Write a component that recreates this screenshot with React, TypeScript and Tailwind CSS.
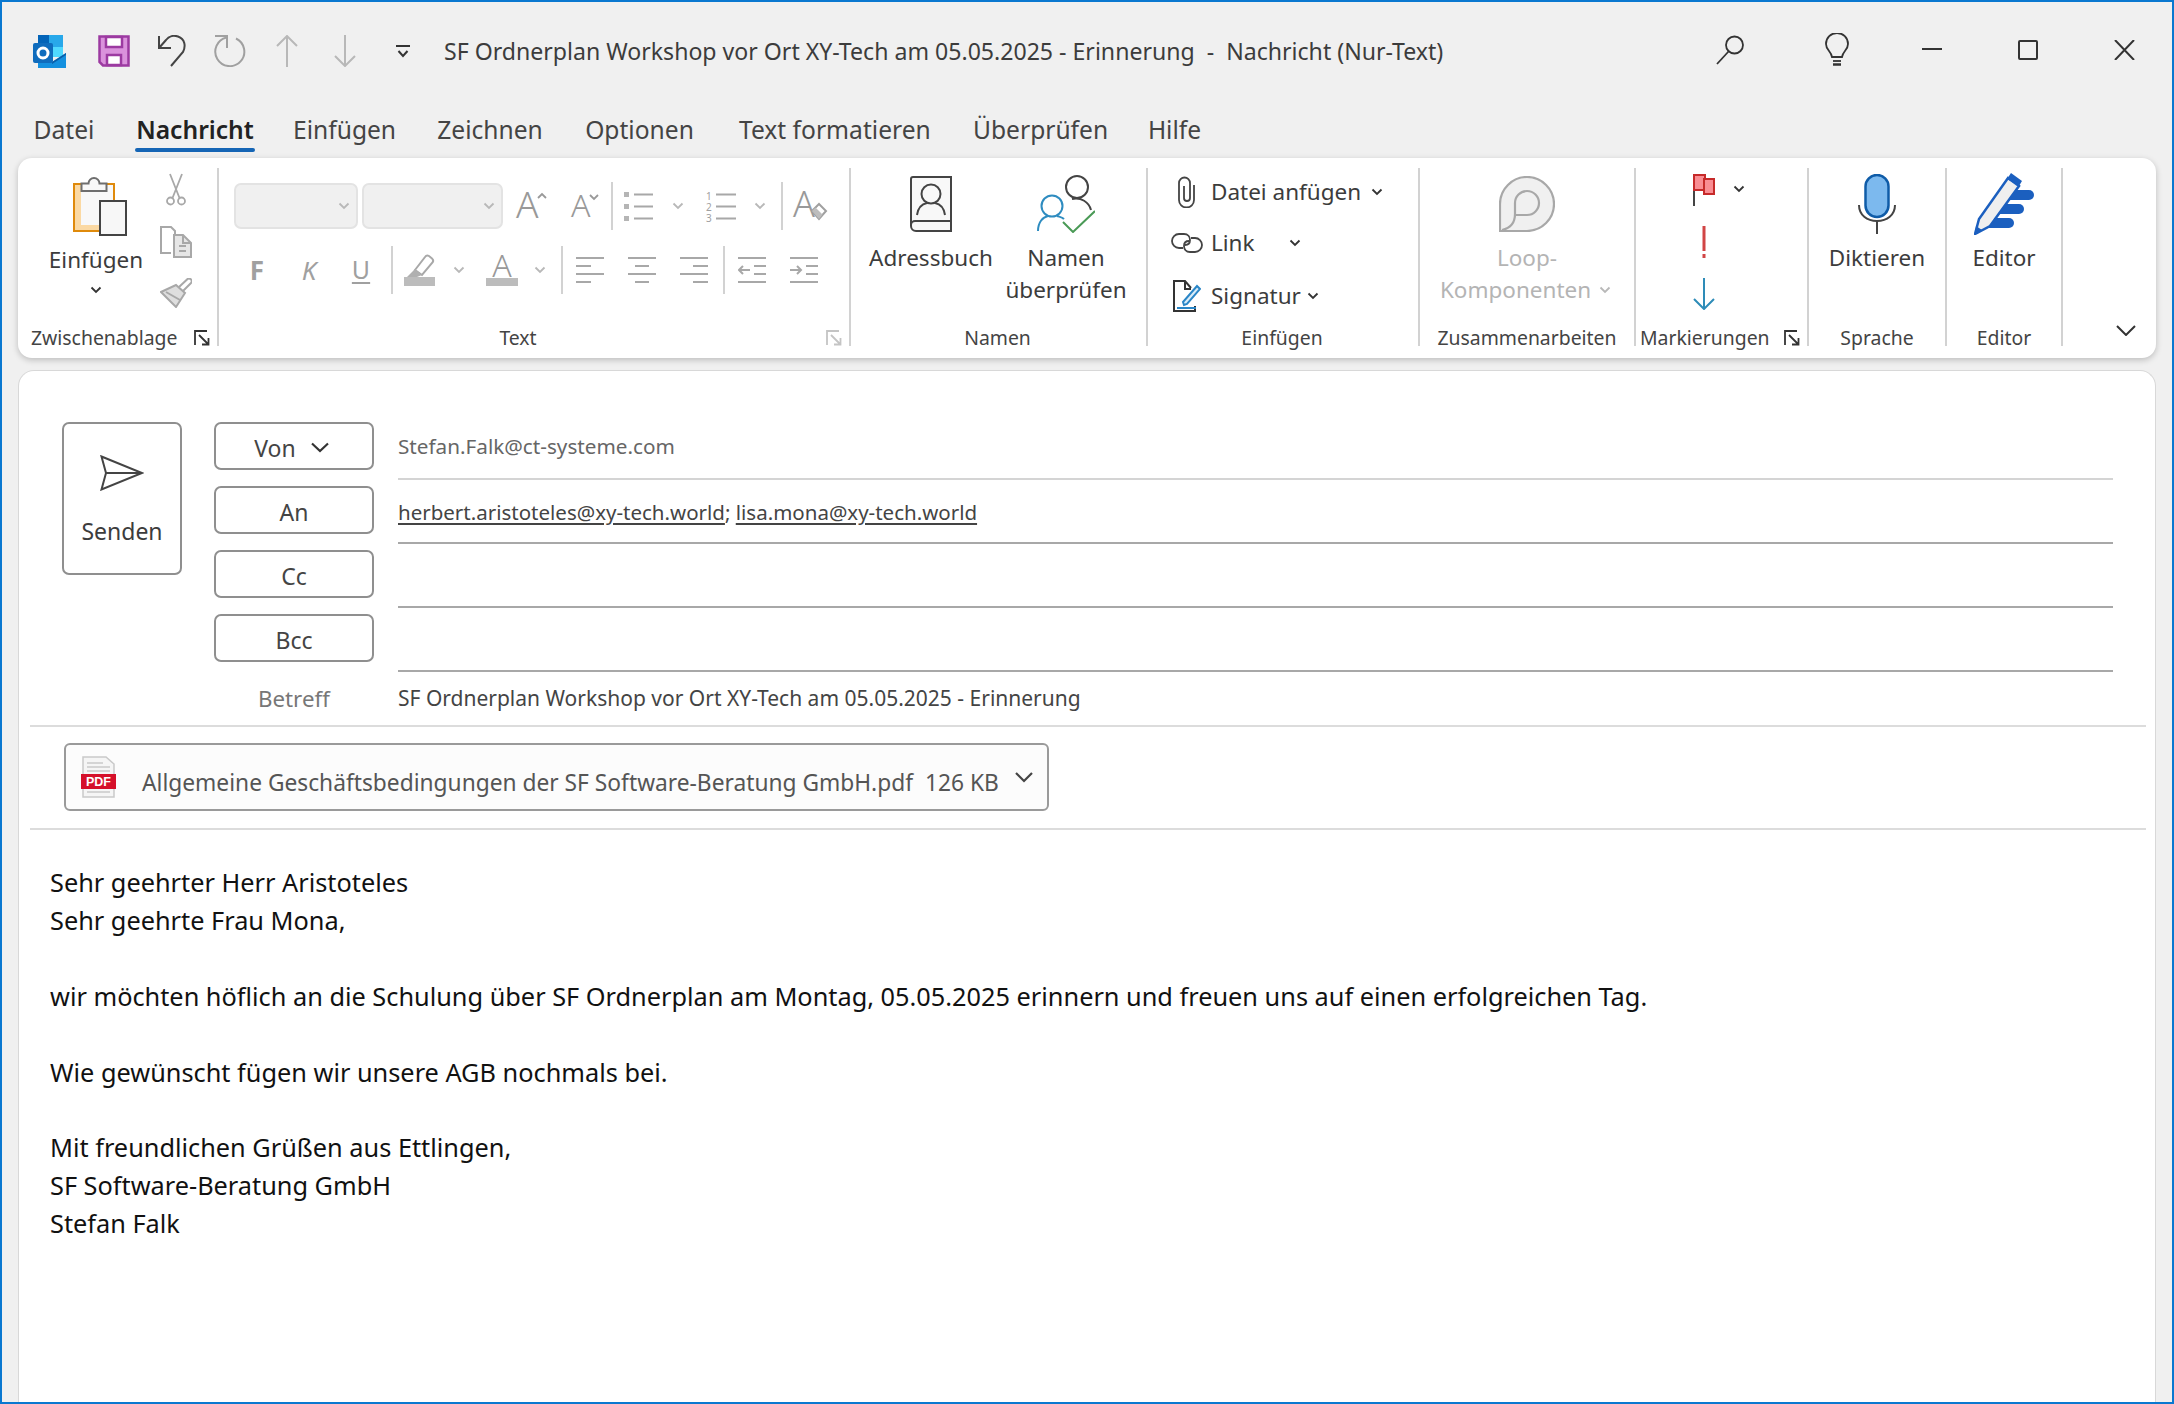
import React from 'react';

const Chev = ({ color = '#333', w = 12 }: { color?: string; w?: number }) => (
  <svg width={w} height={8} viewBox="0 0 12 8" className="shrink-0">
    <polyline points="1.5,1.5 6,6 10.5,1.5" fill="none" stroke={color} strokeWidth="1.8" />
  </svg>
);

const GRAY = '#a8a8a8';
const FONT = 'Noto Sans';

const Launcher = ({ color = '#333' }: { color?: string }) => (
  <svg width={16} height={16} viewBox="0 0 16 16">
    <path d="M1 15V1H13M5 5L14.5 14.5M14.5 8V14.5H8" fill="none" stroke={color} strokeWidth="1.8" />
  </svg>
);

const OutlookLogo = () => (
  <svg width={33} height={33} viewBox="0 0 33 33">
    <rect x="5" y="0" width="11" height="12" fill="#0364b8" />
    <rect x="16" y="0" width="14" height="12" fill="#28a8ea" />
    <rect x="5" y="12" width="11" height="10" fill="#0078d4" />
    <rect x="16" y="12" width="14" height="10" fill="#50d9ff" />
    <path d="M5 19L19 27L33 18V33H5Z" fill="#1490df" />
    <path d="M19 27L33 18V20L19 29Z" fill="#0a5ea8" />
    <rect x="0" y="8" width="20" height="20" rx="2" fill="#0f6cbd" />
    <circle cx="10" cy="18" r="5" fill="none" stroke="#fff" strokeWidth="3" />
  </svg>
);

const SaveIcon = () => (
  <svg width={32} height={32} viewBox="0 0 32 32">
    <path d="M1.5 1.5H30.5V30.5H5L1.5 27Z" fill="#da92dc" stroke="#9c3aa1" strokeWidth="2.5" />
    <rect x="8" y="2" width="16" height="10" fill="#fff" stroke="#9c3aa1" strokeWidth="2.5" />
    <rect x="9" y="20" width="14" height="10" fill="#fff" stroke="#9c3aa1" strokeWidth="2.5" />
  </svg>
);

const UndoIcon = () => (
  <svg width={28} height={32} viewBox="0 0 28 32">
    <path d="M1 1V13H13M1 13L8 5C11 1 16 0 20 1.5C27 4 28 11 25 17L13 31" fill="none" stroke="#444" strokeWidth="2" />
  </svg>
);

const RedoIcon = () => (
  <svg width={32} height={32} viewBox="0 0 32 32">
    <path d="M1 1H13V13M12.5 2.5A14.5 14.5 0 1 0 22 3.5" fill="none" stroke="#a0a0a0" strokeWidth="2" />
  </svg>
);

const ArrowV = ({ up, color }: { up?: boolean; color: string }) => (
  <svg width={22} height={32} viewBox="0 0 22 32">
    <path
      d={up ? 'M11 32V1M1 11L11 1L21 11' : 'M11 0V31M1 21L11 31L21 21'}
      fill="none"
      stroke={color}
      strokeWidth="2"
    />
  </svg>
);

const PasteIcon = () => (
  <svg width={54} height={61} viewBox="0 0 54 61">
    <rect x="1" y="9" width="40" height="47" fill="#f8f8f8" stroke="#df8a0b" strokeWidth="2" />
    <path d="M2 10H8V50H27V55H2Z" fill="#fbd9a3" />
    <rect x="1" y="9" width="40" height="47" fill="none" stroke="#df8a0b" strokeWidth="2" />
    <path d="M8.5 16V8.5H15.5A5.5 5.5 0 0 1 26.5 8.5H33.5V16Z" fill="#f8f8f8" stroke="#6e6e6e" strokeWidth="2" />
    <rect x="27" y="26" width="26" height="34" fill="#f7f7f7" stroke="#444" strokeWidth="2" />
  </svg>
);

const ScissorsIcon = () => (
  <svg width={20} height={33} viewBox="0 0 20 33" fill="none" stroke={GRAY} strokeWidth="1.8">
    <circle cx="4.5" cy="28" r="3.5" />
    <circle cx="15.5" cy="28" r="3.5" />
    <path d="M6.5 25L16 1M13.5 25L4 1" />
  </svg>
);

const CopyIcon = () => (
  <svg width={32} height={32} viewBox="0 0 32 32" fill="none" stroke={GRAY} strokeWidth="2">
    <path d="M11 27H1V1H11L15 5V8" />
    <path d="M14 9H23L31 17V31H14Z" fill="#e6e6e6" />
    <path d="M23 9V17H31M19 20H26M19 25H26" />
  </svg>
);

const BrushIcon = () => (
  <svg width={32} height={30} viewBox="0 0 32 30" fill="none" stroke={GRAY} strokeWidth="2">
    <path d="M1 14L16 7L25 15L16 29Z" fill="#dedede" />
    <path d="M19 9L27 1.5A2.5 2.5 0 0 1 31 5L23 13" />
    <path d="M6 14L20 22" />
  </svg>
);

const FontA = ({ w, h, size, dir }: { w: number; h: number; size: number; dir: 'up' | 'down' }) => (
  <svg width={w} height={h} viewBox={`0 0 ${w} ${h}`} className="overflow-visible">
    <text x="0" y={h} fontSize={size} fontWeight="300" fontFamily={FONT} fill="#999">A</text>
    <polyline
      points={dir === 'up' ? `${w - 9},7 ${w - 5},3 ${w - 1},7` : `${w - 9},2 ${w - 5},6 ${w - 1},2`}
      fill="none"
      stroke="#999"
      strokeWidth="1.8"
    />
  </svg>
);

const BulletsIcon = () => (
  <svg width={29} height={29} viewBox="0 0 29 29" fill="none" stroke={GRAY} strokeWidth="2">
    <rect x="0" y="0" width="5" height="5" fill="#b5b5b5" stroke="none" />
    <rect x="0" y="12" width="5" height="5" fill="#b5b5b5" stroke="none" />
    <rect x="0" y="24" width="5" height="5" fill="#b5b5b5" stroke="none" />
    <path d="M10 2.5H29M10 14.5H29M10 26.5H29" />
  </svg>
);

const NumbersIcon = () => (
  <svg width={30} height={31} viewBox="0 0 30 31" className="overflow-visible">
    <text x="0" y="9" fontSize="10" fontFamily={FONT} fill="#a0a0a0">1</text>
    <text x="0" y="20" fontSize="10" fontFamily={FONT} fill="#a0a0a0">2</text>
    <text x="0" y="31" fontSize="10" fontFamily={FONT} fill="#a0a0a0">3</text>
    <path d="M10 3.5H30M10 15.5H30M10 27.5H30" fill="none" stroke={GRAY} strokeWidth="2" />
  </svg>
);

const ClearIcon = () => (
  <svg width={33} height={32} viewBox="0 0 33 32" className="overflow-visible">
    <text x="0" y="27" fontSize="36" fontWeight="300" fontFamily={FONT} fill="#999">A</text>
    <path d="M19 21L26 14L33 21L26 29Z" fill="#fff" stroke="#a0a0a0" strokeWidth="2" />
    <path d="M19 21L22.5 17.5L29.5 24.5L26 29Z" fill="#bdbdbd" />
  </svg>
);

const HighlightIcon = () => (
  <svg width={31} height={32} viewBox="0 0 31 32">
    <rect x="0" y="23" width="31" height="9" fill="#bcbcbc" />
    <path d="M11 16L21 3A3 3 0 0 1 25 2L28 4.500A3 3 0 0 1 28.500 8.500L18 21Z" fill="#fff" stroke="#a8a8a8" strokeWidth="2" />
    <path d="M11 15L18 21L13 23H3Z" fill="#b0b0b0" />
  </svg>
);

const ColorA = () => (
  <svg width={32} height={32} viewBox="0 0 32 32" className="overflow-visible">
    <text x="16" y="23" textAnchor="middle" fontSize="32" fontWeight="300" fontFamily={FONT} fill="#999">A</text>
    <rect x="0" y="24" width="32" height="8" fill="#bcbcbc" />
  </svg>
);

const AlignIcon = ({ kind }: { kind: 'l' | 'c' | 'r' }) => {
  const d = {
    l: 'M0 1H28M0 9H15M0 17H28M0 25H15',
    c: 'M0 1H28M7 9H21M0 17H28M7 25H21',
    r: 'M0 1H28M13 9H28M0 17H28M13 25H28',
  }[kind];
  return (
    <svg width={28} height={26} viewBox="0 0 28 26">
      <path d={d} fill="none" stroke={GRAY} strokeWidth="2" />
    </svg>
  );
};

const IndentIcon = ({ out }: { out?: boolean }) => (
  <svg width={28} height={26} viewBox="0 0 28 26" fill="none" stroke={GRAY} strokeWidth="2">
    <path d="M0 1H28M0 25H28M16 9H28M16 17H28" />
    <path d={out ? 'M12 13H1M5 9L1 13L5 17' : 'M0 13H11M7 9L11 13L7 17'} />
  </svg>
);

const BookIcon = () => (
  <svg width={42} height={56} viewBox="0 0 42 56" fill="none" stroke="#444" strokeWidth="2">
    <path d="M3 1H41V55H6A5 5 0 0 1 1 50V3A2 2 0 0 1 3 1Z" fill="#f8f8f8" />
    <path d="M1 49A4 4 0 0 1 5 45H41" />
    <circle cx="21" cy="18" r="9.500" />
    <path d="M7 39C8 32 12 28 17 27M25 27C30 28 34 32 35 39" />
  </svg>
);

const CheckNamesIcon = () => (
  <svg width={58} height={58} viewBox="0 0 58 58" fill="none" strokeWidth="2">
    <circle cx="40" cy="12" r="11" stroke="#444" />
    <path d="M35 24C44 22 52 27 54 35" stroke="#444" />
    <circle cx="15" cy="31" r="10.500" stroke="#2e8cc0" />
    <path d="M1 56C1 47 6 42 11 41M20 41C23 42 25 42 27 44" stroke="#2e8cc0" />
    <path d="M26 47L36 57L58 36" stroke="#4a9a56" />
  </svg>
);

const ClipIcon = () => (
  <svg width={18} height={32} viewBox="0 0 18 32">
    <path d="M6 10V22A3 3 0 0 0 12 22V7A5.500 5.500 0 0 0 1 7V24A7.500 7.500 0 0 0 16 24V9" fill="none" stroke="#444" strokeWidth="1.800" />
  </svg>
);

const LinkIcon = () => (
  <svg width={32} height={20} viewBox="0 0 32 20" fill="none" stroke="#444" strokeWidth="1.800">
    <path d="M12 15H8A7 7 0 0 1 8 1H13C17 1 19 4 19 7C19 10 17 12 14 12" />
    <path d="M20 5H24A7 7 0 0 1 24 19H19C15 19 13 16 13 13C13 10 15 8 18 8" />
  </svg>
);

const SignatureIcon = () => (
  <svg width={28} height={32} viewBox="0 0 28 32" fill="none">
    <path d="M22 26V31H1V1H12L18 8" stroke="#333" strokeWidth="2" />
    <path d="M12 1V9H18" stroke="#333" strokeWidth="2" />
    <path d="M10 22L11 25L14 24L27 9L24 6Z" fill="#d9ecf8" stroke="#2a86c7" strokeWidth="2" />
    <path d="M4 28H23" stroke="#2a86c7" strokeWidth="2" />
  </svg>
);

const LoopIcon = () => (
  <svg width={56} height={56} viewBox="0 0 56 56" fill="none" stroke="#a8a8a8" strokeWidth="2.200">
    <path d="M1 55V28A27 27 0 1 1 28 55Z" fill="#f0f0f0" />
    <path d="M3 54C12 52 16 47 16 38V27A12 12 0 1 1 28 39H16" />
  </svg>
);

const FlagIcon = () => (
  <svg width={22} height={32} viewBox="0 0 22 32">
    <path d="M1 0V32" stroke="#444" strokeWidth="2" />
    <rect x="1" y="1" width="11" height="15" fill="#f98d93" stroke="#c62a2a" strokeWidth="2" />
    <rect x="11" y="5" width="10" height="15" fill="#f98d93" stroke="#c62a2a" strokeWidth="2" />
  </svg>
);

const ImportanceIcon = () => (
  <svg width={22} height={32} viewBox="0 0 22 32">
    <rect x="9.500" y="0" width="3" height="25" fill="#d14545" />
    <rect x="9.500" y="28" width="3" height="4" fill="#d14545" />
  </svg>
);

const MicIcon = () => (
  <svg width={38} height={60} viewBox="0 0 38 60" fill="none">
    <path d="M1 31C1 41 9 47 19 47C29 47 37 41 37 31" stroke="#444" strokeWidth="2" />
    <path d="M19 47V60" stroke="#444" strokeWidth="2" />
    <rect x="7.500" y="1" width="23" height="42" rx="11.500" fill="#7cb9ee" stroke="#0f5ca8" strokeWidth="2.500" />
  </svg>
);

const EditorIcon = () => (
  <svg width={60} height={62} viewBox="0 0 60 62">
    <path d="M36 17H55A5 5 0 0 1 55 27H30Z" fill="#1b5fbf" />
    <path d="M26 31H45A5 5 0 0 1 45 41H19Z" fill="#1b5fbf" />
    <path d="M16 45H35A5 5 0 0 1 35 55H9Z" fill="#1b5fbf" />
    <path d="M1 61L5 46L34 5L45 13L16 53Z" fill="#efefef" stroke="#1b5fbf" strokeWidth="2.500" />
    <path d="M33 6L37 0L48 8L45 13Z" fill="#1b5fbf" />
    <path d="M1 61L2 53L8 57Z" fill="#1b5fbf" />
  </svg>
);

const SendIcon = () => (
  <svg width={44} height={36} viewBox="0 0 44 36" fill="none" stroke="#444" strokeWidth="2">
    <path d="M1.500 1.500L42 18L1.500 34.500L6 18Z" />
    <path d="M6 18H42" />
  </svg>
);

const PdfIcon = () => (
  <svg width={35} height={42} viewBox="0 0 35 42">
    <path d="M2 1H25L33 8V41H2Z" fill="#f5f5f5" stroke="#c9c9c9" strokeWidth="1.500" />
    <path d="M6 7H22M6 11H29M6 15H29M6 36H29" stroke="#c9c9c9" strokeWidth="1.500" />
    <rect x="0" y="18" width="35" height="15" fill="#d5102a" />
    <text x="17.500" y="30" textAnchor="middle" fontSize="12.500" fontWeight="700" fontFamily="Liberation Sans" fill="#fff">PDF</text>
  </svg>
);

const BigButton = ({ className, icon, lines, textClass }: { className?: string; icon: React.ReactNode; lines: React.ReactNode[]; textClass?: string }) => (
  <div className={`flex flex-col items-center ${className ?? ''}`}>
    <div className="h-[56px] mt-[8px] flex items-center justify-center">{icon}</div>
    <div className={`mt-[10px] text-center text-[22.500px] leading-[32px] whitespace-nowrap ${textClass ?? 'text-[#3c3c3c]'}`}>
      {lines.map((l, i) => (
        <div key={i} className="flex items-center justify-center">{l}</div>
      ))}
    </div>
  </div>
);

const Group = ({ className, label, children }: { className: string; label: React.ReactNode; children: React.ReactNode }) => (
  <div className={`flex flex-col shrink-0 border-r-2 border-[#d2d2d2] ${className}`}>
    <div className="h-[162px]">{children}</div>
    <div className="h-[16px] flex items-center text-[19.400px] leading-[16px] text-[#444] whitespace-nowrap">{label}</div>
  </div>
);

const Sep = () => <div className="w-[2px] h-[48px] bg-[#d2d2d2] shrink-0" />;

const Combo = ({ className }: { className: string }) => (
  <div className={`h-[46px] rounded-[7px] bg-[#f0f0f0] border-2 border-[#e3e3e3] flex items-center justify-end pr-[6px] ${className}`}>
    <Chev color="#b8b8b8" />
  </div>
);

const tabs = [
  { name: 'Datei', cls: 'ml-0 w-[62px]' },
  { name: 'Nachricht', cls: 'ml-[40px] w-[120px]', active: true },
  { name: 'Einfügen', cls: 'ml-[38px] w-[103px]' },
  { name: 'Zeichnen', cls: 'ml-[40px] w-[108px]' },
  { name: 'Optionen', cls: 'ml-[39px] w-[113px]' },
  { name: 'Text formatieren', cls: 'ml-[43px] w-[190px]' },
  { name: 'Überprüfen', cls: 'ml-[44px] w-[134px]' },
  { name: 'Hilfe', cls: 'ml-[40px] w-[55px]' },
];

export default function App() {
  return (
    <div className="w-[2174px] h-[1404px] box-border border-2 border-[#0a78d0] bg-[#f0f0f0] flex flex-col overflow-hidden font-['Noto_Sans','Liberation_Sans',sans-serif]">
      {/* title bar */}
      <div className="h-[98px] shrink-0 flex items-center pl-[31px] pr-[37px]">
        <OutlookLogo />
        <div className="ml-[32px]"><SaveIcon /></div>
        <div className="ml-[28px]"><UndoIcon /></div>
        <div className="ml-[28px]"><RedoIcon /></div>
        <div className="ml-[30px]"><ArrowV up color="#b8b8b8" /></div>
        <div className="ml-[36px]"><ArrowV color="#b8b8b8" /></div>
        <div className="ml-[40px]">
          <svg width={14} height={13} viewBox="0 0 14 13" fill="none" stroke="#333" strokeWidth="2">
            <path d="M0 1H14M2.500 6L7 11L11.500 6" />
          </svg>
        </div>
        <div className="ml-[34px] text-[23.100px] text-[#3c3c3c] whitespace-pre">SF Ordnerplan Workshop vor Ort XY-Tech am 05.05.2025 - Erinnerung  -  Nachricht (Nur-Text)</div>
        <div className="ml-auto -mt-[3px]">
          <svg width={28} height={30} viewBox="0 0 28 30" fill="none" stroke="#333" strokeWidth="1.800">
            <circle cx="18.500" cy="10" r="8.500" />
            <path d="M12.500 16.500L1 29" />
          </svg>
        </div>
        <div className="ml-[81px] -mt-[4px]">
          <svg width={24} height={33} viewBox="0 0 24 33" fill="none" stroke="#333" strokeWidth="1.800">
            <path d="M7 24C6 18 1 17 1 11A11 11 0 0 1 23 11C23 17 18 18 17 24Z" />
            <path d="M8 28H16" />
            <path d="M8 31.500H16" strokeWidth="2.500" />
          </svg>
        </div>
        <div className="ml-[73px] w-[20px] h-[2px] bg-[#333] -mt-[4px]" />
        <div className="ml-[76px] w-[20px] h-[20px] rounded-[2px] border-2 border-[#333] -mt-[3px]" />
        <div className="ml-[76px] -mt-[2px]">
          <svg width={21} height={20} viewBox="0 0 21 20" fill="none" stroke="#333" strokeWidth="2">
            <path d="M1 0L20 20M20 0L1 20" />
          </svg>
        </div>
      </div>

      {/* tabs */}
      <div className="h-[58px] shrink-0 flex pl-[31px]">
        {tabs.map(t => (
          <div key={t.name} className={`flex flex-col ${t.cls}`}>
            <div className={`pt-[14px] text-[24.600px] leading-[32px] whitespace-nowrap text-center ${t.active ? 'text-[#222] font-semibold' : 'text-[#444]'}`}>{t.name}</div>
            {t.active && <div className="mt-[2px] h-[4px] rounded-[2px] bg-[#1565b5]" />}
          </div>
        ))}
      </div>

      {/* ribbon */}
      <div className="ml-[16px] mr-[16px] h-[200px] shrink-0 bg-white rounded-[14px] shadow-[0_2px_6px_rgba(0,0,0,0.22)] flex pt-[10px] pb-[12px]">
        <Group
          className="w-[201px]"
          label={
            <>
              <span className="ml-[13px]">Zwischenablage</span>
              <span className="ml-auto mr-[7px]"><Launcher /></span>
            </>
          }
        >
          <div className="flex">
            <div className="w-[142px] pl-[14px] flex flex-col items-center">
              <div className="mt-[7px] translate-x-[4px]"><PasteIcon /></div>
              <div className="mt-[8px] text-[22.500px] leading-[32px] text-[#3c3c3c]">Einfügen</div>
              <div className="mt-[10px]"><Chev /></div>
            </div>
            <div className="w-[32px] flex flex-col items-center">
              <div className="mt-[5px]"><ScissorsIcon /></div>
              <div className="mt-[20px]"><CopyIcon /></div>
              <div className="mt-[20px]"><BrushIcon /></div>
            </div>
          </div>
        </Group>

        <Group
          className="w-[632px]"
          label={
            <>
              <span className="ml-[269px] w-[60px] text-center">Text</span>
              <span className="ml-auto mr-[7px]"><Launcher color="#c4c4c4" /></span>
            </>
          }
        >
          <div className="flex items-center h-[48px] mt-[14px] ml-[15px]">
            <Combo className="w-[124px]" />
            <Combo className="w-[141px] ml-[4px]" />
            <div className="ml-[13px] -mt-[4px]"><FontA w={31} h={27} size={37} dir="up" /></div>
            <div className="ml-[24px] -mt-[2px]"><FontA w={28} h={24} size={32} dir="down" /></div>
            <div className="ml-[12px]"><Sep /></div>
            <div className="ml-[11px]"><BulletsIcon /></div>
            <div className="ml-[19px]"><Chev color="#b8b8b8" /></div>
            <div className="ml-[22px]"><NumbersIcon /></div>
            <div className="ml-[18px]"><Chev color="#b8b8b8" /></div>
            <div className="ml-[15px]"><Sep /></div>
            <div className="ml-[10px]"><ClearIcon /></div>
          </div>
          <div className="flex items-center h-[48px] mt-[16px] ml-[28px] text-[#a0a0a0]">
            <div className="w-[20px] text-center text-[26px] font-bold">F</div>
            <div className="w-[20px] ml-[32px] text-center text-[26px] italic">K</div>
            <div className="w-[20px] ml-[32px] text-center text-[25px] underline underline-offset-[3px]">U</div>
            <div className="ml-[20px]"><Sep /></div>
            <div className="ml-[11px]"><HighlightIcon /></div>
            <div className="ml-[18px]"><Chev color="#b8b8b8" /></div>
            <div className="ml-[21px]"><ColorA /></div>
            <div className="ml-[16px]"><Chev color="#b8b8b8" /></div>
            <div className="ml-[15px]"><Sep /></div>
            <div className="ml-[13px]"><AlignIcon kind="l" /></div>
            <div className="ml-[24px]"><AlignIcon kind="c" /></div>
            <div className="ml-[24px]"><AlignIcon kind="r" /></div>
            <div className="ml-[15px]"><Sep /></div>
            <div className="ml-[13px]"><IndentIcon out /></div>
            <div className="ml-[24px]"><IndentIcon /></div>
          </div>
        </Group>

        <Group className="w-[297px]" label={<span className="w-full pr-[2px] text-center">Namen</span>}>
          <div className="flex ml-[10px]">
            <BigButton className="w-[140px]" icon={<BookIcon />} lines={['Adressbuch']} />
            <BigButton className="w-[130px]" icon={<CheckNamesIcon />} lines={['Namen', 'überprüfen']} />
          </div>
        </Group>

        <Group className="w-[272px]" label={<span className="w-full pr-[2px] text-center">Einfügen</span>}>
          <div className="text-[22.500px] leading-[32px] text-[#3c3c3c]">
            <div className="flex items-center mt-[8px] ml-[23px]">
              <div className="w-[32px] flex justify-center"><ClipIcon /></div>
              <div className="ml-[8px] w-[151px] whitespace-nowrap">Datei anfügen</div>
              <div className="ml-[9px]"><Chev /></div>
            </div>
            <div className="flex items-center mt-[19px] ml-[23px]">
              <div className="w-[32px] flex justify-center"><LinkIcon /></div>
              <div className="ml-[8px] w-[42px]">Link</div>
              <div className="ml-[36px]"><Chev /></div>
            </div>
            <div className="flex items-center mt-[21px] ml-[23px]">
              <div className="w-[32px] flex justify-center"><SignatureIcon /></div>
              <div className="ml-[8px] w-[89px]">Signatur</div>
              <div className="ml-[7px]"><Chev /></div>
            </div>
          </div>
        </Group>

        <Group className="w-[216px]" label={<span className="w-full text-center">Zusammenarbeiten</span>}>
          <BigButton
            className="pr-[3px]"
            icon={<span className="pl-[3px]"><LoopIcon /></span>}
            textClass="text-[#b4b4b4]"
            lines={[
              <span className="pl-[3px]">Loop-</span>,
              <>
                Komponenten
                <span className="ml-[8px]"><Chev color="#b8b8b8" /></span>
              </>,
            ]}
          />
        </Group>

        <Group
          className="w-[173px]"
          label={
            <>
              <span className="ml-[4px]">Markierungen</span>
              <span className="ml-auto mr-[7px]"><Launcher /></span>
            </>
          }
        >
          <div className="flex flex-col ml-[57px]">
            <div className="flex items-center mt-[6px]">
              <FlagIcon />
              <div className="ml-[18px] -mt-[2px]"><Chev /></div>
            </div>
            <div className="mt-[20px]"><ImportanceIcon /></div>
            <div className="mt-[20px]"><ArrowV color="#2e8cb8" /></div>
          </div>
        </Group>

        <Group className="w-[138px]" label={<span className="w-full text-center">Sprache</span>}>
          <BigButton icon={<MicIcon />} lines={['Diktieren']} />
        </Group>

        <Group className="w-[116px]" label={<span className="w-full text-center">Editor</span>}>
          <BigButton icon={<EditorIcon />} lines={['Editor']} />
        </Group>

        <div className="flex-1 flex items-end justify-end pr-[20px] pb-[10px]">
          <svg width={20} height={11} viewBox="0 0 20 11">
            <polyline points="1,1 10,10 19,1" fill="none" stroke="#333" strokeWidth="2" />
          </svg>
        </div>
      </div>

      {/* message */}
      <div className="mt-[12px] mx-[16px] flex-1 bg-white rounded-t-[16px] border border-b-0 border-[#d8d8d8]">
        <div className="flex pt-[51px] pl-[43px] pr-[42px]">
          <div className="w-[120px] h-[153px] shrink-0 rounded-[7px] border-2 border-[#8f8f8f] flex flex-col items-center">
            <div className="mt-[31px]"><SendIcon /></div>
            <div className="mt-[24px] text-[23px] leading-[32px] text-[#3c3c3c]">Senden</div>
          </div>
          <div className="ml-[32px] w-[160px] shrink-0 flex flex-col gap-[16px] text-[23px] leading-[44px] text-[#444]">
            <div className="h-[48px] rounded-[7px] border-2 border-[#8f8f8f] flex items-center justify-center gap-[14px] pt-[3px] pr-[4px]">
              Von
              <svg width={20} height={11} viewBox="0 0 20 11">
                <polyline points="2,1.500 10,9 18,1.500" fill="none" stroke="#333" strokeWidth="2.200" />
              </svg>
            </div>
            {['An', 'Cc', 'Bcc'].map(b => (
              <div key={b} className="h-[48px] rounded-[7px] border-2 border-[#8f8f8f] flex items-center justify-center pt-[3px]">{b}</div>
            ))}
          </div>
          <div className="ml-[24px] flex-1 flex flex-col text-[20.500px]">
            <div className="h-[58px] border-b-2 border-[#d4d4d4] leading-[49px] text-[20.700px] text-[#666]">Stefan.Falk@ct-systeme.com</div>
            <div className="h-[64px] border-b-2 border-[#a8a8a8] leading-[64px] text-[#444]">
              <span className="underline underline-offset-[3px]">herbert.aristoteles@xy-tech.world</span>
              <span>; </span>
              <span className="underline underline-offset-[3px]">lisa.mona@xy-tech.world</span>
            </div>
            <div className="h-[64px] border-b-2 border-[#a8a8a8]" />
            <div className="h-[64px] border-b-2 border-[#a8a8a8]" />
          </div>
        </div>
        <div className="h-[53px] flex items-center pl-[239px] text-[21px]">
          <div className="w-[140px] text-[22.300px] pt-[1px] text-[#777]">Betreff</div>
          <div className="text-[#444]">SF Ordnerplan Workshop vor Ort XY-Tech am 05.05.2025 - Erinnerung</div>
        </div>
        <div className="ml-[11px] mr-[9px] border-t-2 border-[#dcdcdc]" />
        <div className="mt-[16px] ml-[45px] w-[985px] h-[68px] rounded-[6px] border-2 border-[#9a9a9a] bg-[#fcfcfc] flex items-center pl-[15px] pr-[14px] text-[22.750px] text-[#555]">
          <PdfIcon />
          <div className="ml-[26px] mt-[13px] whitespace-nowrap">Allgemeine Geschäftsbedingungen der SF Software-Beratung GmbH.pdf</div>
          <div className="ml-[12px] mt-[13px] whitespace-nowrap">126 KB</div>
          <div className="ml-auto">
            <svg width={18} height={11} viewBox="0 0 18 11">
              <polyline points="1,1 9,9 17,1" fill="none" stroke="#444" strokeWidth="2.200" />
            </svg>
          </div>
        </div>
        <div className="mt-[17px] ml-[11px] mr-[9px] border-t-2 border-[#dcdcdc]" />
        <div className="pt-[34px] pl-[31px] text-[25.320px] leading-[37.900px] text-[#111]">
          <div>Sehr geehrter Herr Aristoteles</div>
          <div>Sehr geehrte Frau Mona,</div>
          <div className="h-[37.900px]" />
          <div>wir möchten höflich an die Schulung über SF Ordnerplan am Montag, 05.05.2025 erinnern und freuen uns auf einen erfolgreichen Tag.</div>
          <div className="h-[37.900px]" />
          <div>Wie gewünscht fügen wir unsere AGB nochmals bei.</div>
          <div className="h-[37.900px]" />
          <div>Mit freundlichen Grüßen aus Ettlingen,</div>
          <div>SF Software-Beratung GmbH</div>
          <div>Stefan Falk</div>
        </div>
      </div>
    </div>
  );
}
